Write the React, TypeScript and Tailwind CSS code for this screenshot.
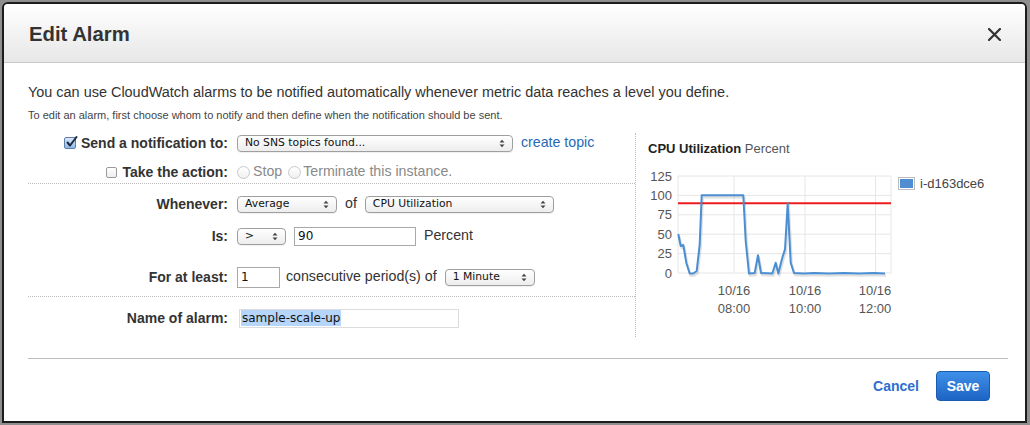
import React from 'react';

const sans = { fontFamily: '"Liberation Sans", Arial, sans-serif' };
const ui = { fontFamily: '"DejaVu Sans", "Liberation Sans", sans-serif' };

function Arrows() {
  return (
    <svg width="6" height="9" viewBox="0 0 6 9" className="shrink-0">
      <path d="M0.5 3.5 L3 0.8 L5.5 3.5 Z" fill="#444" />
      <path d="M0.5 5.5 L3 8.2 L5.5 5.5 Z" fill="#444" />
    </svg>
  );
}

function Select({ label, width, className = '' }: { label: string; width: number; className?: string }) {
  return (
    <div
      className={`flex items-center justify-between h-[17px] pl-[7px] pr-[7px] rounded-[4px] border border-[#9f9f9f] bg-gradient-to-b from-white to-[#ededed] text-[10.8px] text-[#111] shadow-[0_1px_0_rgba(0,0,0,0.06)] ${className}`}
      style={{ ...ui, width }}
    >
      <span className="leading-none">{label}</span>
      <Arrows />
    </div>
  );
}

function Checkbox({ checked }: { checked?: boolean }) {
  if (checked) {
    return (
      <span className="relative w-[12px] h-[12px] rounded-[2px] border border-[#5f7fa8] bg-gradient-to-b from-[#d9e9fb] to-[#8fb8e8] shrink-0">
        <svg width="14" height="14" viewBox="0 0 14 14" className="absolute -top-[3px] left-[0px]">
          <path d="M2.5 7.5 L5 10.5 L11.5 2" fill="none" stroke="#1c2a3c" strokeWidth="2" strokeLinecap="round" strokeLinejoin="round" />
        </svg>
      </span>
    );
  }
  return <span className="w-[11px] h-[11px] rounded-[2px] border border-[#9a9a9a] bg-gradient-to-b from-white to-[#eeeeee] shrink-0" />;
}

function Radio() {
  return <span className="w-[13px] h-[13px] rounded-full border border-[#c9c9c9] bg-gradient-to-b from-white to-[#f0f0f0] shrink-0" />;
}

function Row({ label, children, check }: { label: string; children: React.ReactNode; check?: 'on' | 'off' }) {
  return (
    <div className="flex items-center h-[20px]">
      <div className="w-[200px] flex items-center justify-end gap-[5px] text-[14px] font-bold text-[#333]">
        {check === 'on' && <Checkbox checked />}
        {check === 'off' && <Checkbox />}
        <span>{label}</span>
      </div>
      <div className="flex items-center ml-[9px] text-[14.2px] text-[#333]">{children}</div>
    </div>
  );
}

const yTicks = [125, 100, 75, 50, 25, 0];
const yOf = (v: number) => 272 - v * 0.776;

const data =
  '679.3,233 681.7,245 684.3,244 687.3,261.7 690.7,272.5 694.3,272.5 697.7,270 700.7,243.3 702.7,194.3 744.3,194.3 746.7,240 750,272.5 755.7,272 759,254.3 762,272 773.3,272.5 776.7,261.7 779.3,272.5 783.3,256.7 786,248.3 788.7,202.3 791.7,261.7 795,272 805,272.5 815,272 830,272.5 845,272 860,272.5 875,272 886,272.5';

function Chart() {
  return (
    <svg width="371" height="164" viewBox="637 156 371 164" style={sans}>
      {yTicks.map((v) => (
        <g key={v}>
          <line x1="679" x2="892" y1={yOf(v)} y2={yOf(v)} stroke="#e6e6e6" strokeWidth="1" />
          <text x="673" y={yOf(v) + 4.5} textAnchor="end" fontSize="13" fill="#555">
            {v}
          </text>
        </g>
      ))}
      {[679, 735, 806, 876.5, 892].map((x) => (
        <line key={x} x1={x} x2={x} y1="175" y2="272" stroke="#e6e6e6" strokeWidth="1" />
      ))}
      {[735, 806, 876].map((x, i) => (
        <g key={x}>
          <text x={x} y="294" textAnchor="middle" fontSize="13" fill="#555">
            10/16
          </text>
          <text x={x} y="312" textAnchor="middle" fontSize="13" fill="#555">
            {['08:00', '10:00', '12:00'][i]}
          </text>
        </g>
      ))}
      <line x1="679" x2="892" y1="202.3" y2="202.3" stroke="#ee1c1c" strokeWidth="2" />
      <polyline points={data} fill="none" stroke="#000" strokeOpacity="0.12" strokeWidth="2.5" transform="translate(1 2)" strokeLinejoin="round" />
      <polyline points={data} fill="none" stroke="#4a8fd3" strokeWidth="2" strokeLinejoin="round" />
      <rect x="899.5" y="176.5" width="16" height="12" fill="#4f8fd1" stroke="#bdbdbd" strokeWidth="1" />
      <rect x="900.5" y="177.5" width="14" height="10" fill="none" stroke="#fff" strokeWidth="1" />
      <text x="921" y="187" fontSize="13" fill="#444">
        i-d163dce6
      </text>
    </svg>
  );
}

export default function App() {
  return (
    <div className="w-[1030px] h-[425px] bg-[#8f8f8f] pl-[2px] pt-[2px]" style={sans}>
      <div className="w-[1025px] h-[421px] border-2 border-[#1c1c1c] rounded-t-[6px] bg-white overflow-hidden flex flex-col">
        {/* Header */}
        <div className="h-[59px] shrink-0 flex items-center justify-between pt-[3px] pl-[25px] pr-[24px] bg-gradient-to-b from-white to-[#e7e7e7] border-b border-[#c9c9c9]">
          <h1 className="text-[20.3px] font-bold text-[#333] leading-none">Edit Alarm</h1>
          <svg width="13" height="13" viewBox="0 0 13 13">
            <path d="M1 1 L12 12 M12 1 L1 12" stroke="#333" strokeWidth="2.2" strokeLinecap="round" />
          </svg>
        </div>

        {/* Body */}
        <div className="pl-[24px] pr-[17px]">
          <p className="pt-[20px] text-[14.45px] leading-[18px] text-[#333]">
            You can use CloudWatch alarms to be notified automatically whenever metric data reaches a level you define.
          </p>
          <p className="mt-[7px] text-[11px] leading-[14px] text-[#444]">
            To edit an alarm, first choose whom to notify and then define when the notification should be sent.
          </p>

          <div className="mt-[11px] flex h-[204px]">
            {/* Form */}
            <div className="w-[608px] border-r border-dotted border-[#bbbbbb]">
              <div className="h-[51px] border-b border-dotted border-[#bbbbbb]">
                <Row label="Send a notification to:" check="on">
                  <Select label="No SNS topics found..." width={276} />
                  <a className="ml-[8px] text-[#2769b6]">create topic</a>
                </Row>
                <div className="mt-[9px]">
                  <Row label="Take the action:" check="off">
                    <span className="flex items-center gap-[3px] text-[#8a8a8a]">
                      <Radio />
                      <span>Stop</span>
                    </span>
                    <span className="ml-[6px] flex items-center gap-[2px] text-[#8a8a8a]">
                      <Radio />
                      <span>Terminate this instance.</span>
                    </span>
                  </Row>
                </div>
              </div>

              <div className="h-[113px] pt-[10px] border-b border-dotted border-[#bbbbbb]">
                <Row label="Whenever:">
                  <Select label="Average" width={100} />
                  <span className="mx-[8px]">of</span>
                  <Select label="CPU Utilization" width={189} />
                </Row>
                <div className="mt-[12px]">
                  <Row label="Is:">
                    <Select label=">" width={49} />
                    <div className="ml-[8px] w-[122px] h-[19px] border border-[#a9a9a9] flex items-center pl-[3px] text-[12px] text-[#111]" style={ui}>
                      90
                    </div>
                    <span className="ml-[8px]">Percent</span>
                  </Row>
                </div>
                <div className="mt-[21px]">
                  <Row label="For at least:">
                    <div className="w-[43px] h-[21px] border border-[#a9a9a9] flex items-center pl-[3px] text-[12px] text-[#111]" style={ui}>
                      1
                    </div>
                    <span className="ml-[6px]">consecutive period(s) of</span>
                    <Select label="1 Minute" width={90} className="ml-[8px]" />
                  </Row>
                </div>
              </div>

              <div className="pt-[11px]">
                <Row label="Name of alarm:">
                  <div className="ml-[2px] w-[220px] h-[19px] border border-[#dcdcdc] flex items-center pl-[1px] text-[12px] text-[#111]" style={ui}>
                    <span className="bg-[#b5d5fb] leading-[16px] px-[1px]">sample-scale-up</span>
                  </div>
                </Row>
              </div>
            </div>

            {/* Chart */}
            <div className="flex-1 pt-[8px]">
              <div className="h-[16px] leading-[16px] pl-[12px] text-[13px] text-[#222]">
                <span className="font-bold">CPU Utilization</span> <span className="text-[#555]">Percent</span>
              </div>
              <Chart />
            </div>
          </div>

          {/* Footer */}
          <div className="mt-[21px] border-t border-[#bdbdbd]">
            <div className="flex items-center justify-end gap-[17px] pr-[18px] pt-[12px]">
              <a className="text-[14px] font-bold text-[#2d6fcf]">Cancel</a>
              <button className="w-[54px] h-[30px] rounded-[4px] border border-[#1a5cb2] bg-gradient-to-b from-[#3f90e8] to-[#1d64c4] text-white text-[14px] font-bold">
                Save
              </button>
            </div>
          </div>
        </div>
      </div>
    </div>
  );
}
